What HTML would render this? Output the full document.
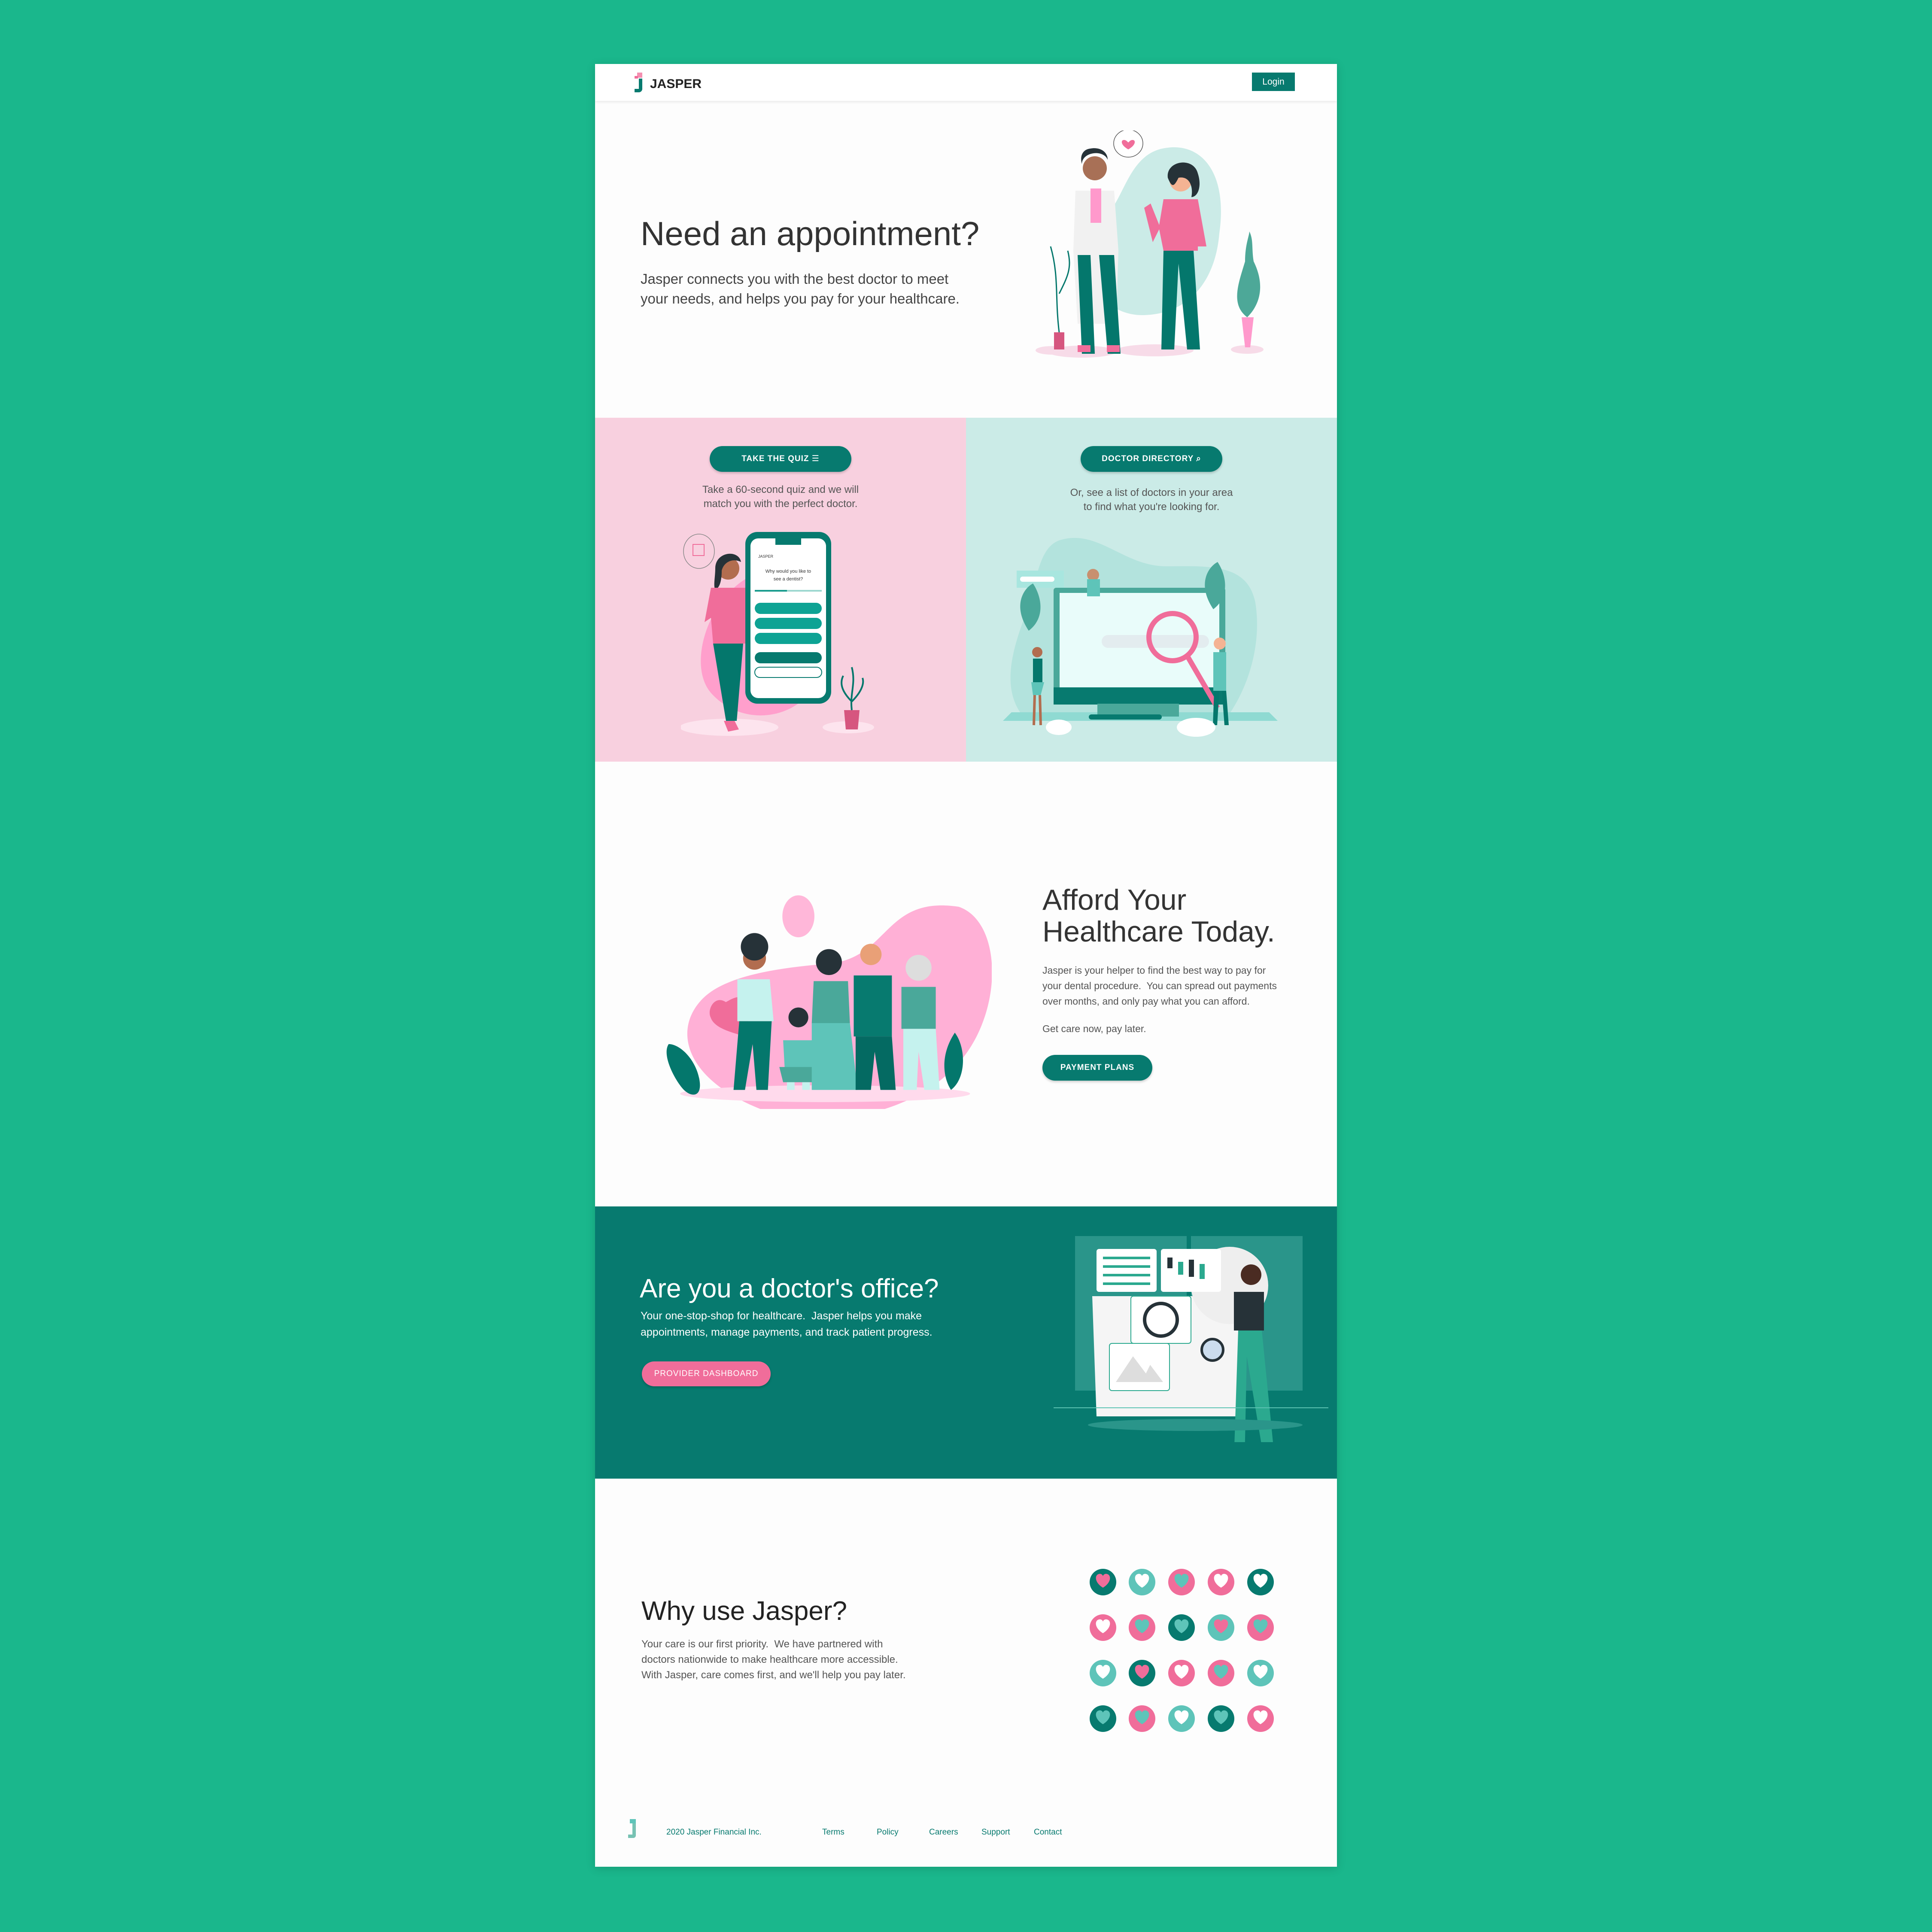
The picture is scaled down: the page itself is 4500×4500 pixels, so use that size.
<!DOCTYPE html>
<html><head><meta charset="utf-8">
<style>
*{margin:0;padding:0;box-sizing:border-box}
html,body{width:4500px;height:4500px;overflow:hidden;background:#1ab78c;font-family:"Liberation Sans",sans-serif}
.a{position:absolute}
#page{position:absolute;left:1386px;top:149px;width:1728px;height:4199px;background:#fdfdfd;overflow:hidden;box-shadow:0 4px 20px rgba(0,0,0,.15)}
.btn{position:absolute;border-radius:40px;color:#fff;font-weight:bold;text-align:center;letter-spacing:1px;box-shadow:0 3px 6px rgba(0,0,0,.2)}
.t{position:absolute;white-space:nowrap}
</style></head><body>
<div id="page">
<!-- header -->
<div class="a" style="left:0;top:0;width:1728px;height:86px;background:#fff;box-shadow:0 3px 6px rgba(0,0,0,.08)"></div>
<svg class="a" style="left:90px;top:20px" width="30" height="48" viewBox="0 0 30 48"><rect x="8" y="0" width="12" height="12" fill="#f48fb1"/><rect x="2" y="8" width="8" height="6" fill="#f06d9a"/><path d="M12 14h8v24a8 8 0 0 1-8 8H2v-8h10z" fill="#077a6f"/></svg>
<div class="t" style="left:128px;top:30px;font-size:30px;font-weight:bold;color:#222">JASPER</div>
<div class="a" style="left:1530px;top:20px;width:100px;height:43px;background:#077a6f;color:#fff;font-size:21px;text-align:center;line-height:43px">Login</div>

<!-- hero -->
<div class="t" style="left:106px;top:350px;font-size:78px;color:#333">Need an appointment?</div>
<div class="t" style="left:106px;top:478px;font-size:33px;line-height:46px;color:#444">Jasper connects you with the best doctor to meet<br>your needs, and helps you pay for your healthcare.</div>
<svg class="a" style="left:1024px;top:155px" width="552" height="556" viewBox="0 0 552 556">
<path d="M310 40c80-10 140 60 120 200-10 120-80 190-180 190-60 0-100-40-130-80-30-40-20-110 30-140 60-30 60-160 160-170z" fill="#cbebe7"/>
<ellipse cx="110" cy="515" rx="80" ry="14" fill="#f7dbe8"/><ellipse cx="280" cy="512" rx="90" ry="14" fill="#f7dbe8"/><ellipse cx="40" cy="512" rx="38" ry="10" fill="#f7dbe8"/><ellipse cx="495" cy="510" rx="38" ry="10" fill="#f7dbe8"/>
<ellipse cx="218" cy="30" rx="34" ry="32" fill="#fff" stroke="#555" stroke-width="1.5"/><path d="M208 22c-8 0-8 12 10 22 18-10 18-22 10-22-5 0-8 4-10 6-2-2-5-6-10-6z" fill="#f06d9a"/>
<circle cx="140" cy="88" r="28" fill="#a87056"/><path d="M110 78c0-28 50-35 60-10 0-20-20-30-40-26-20 2-25 20-20 36z" fill="#263238"/>
<path d="M95 140h90l10 140-5 170H100l-10-170z" fill="#f1f1f1"/><rect x="130" y="135" width="25" height="80" fill="#ff99cc"/>
<path d="M100 290h30l10 230h-30zM150 290h35l15 230h-30z" fill="#04776c"/><rect x="100" y="500" width="30" height="16" fill="#f06d9a"/><rect x="168" y="500" width="30" height="16" fill="#f06d9a"/>
<circle cx="340" cy="116" r="26" fill="#f4b393"/><path d="M310 110c-5-40 60-50 70-10 10 30 0 55-15 55 5-25-5-50-30-45-10 20-15 25-25 0z" fill="#263238"/>
<path d="M300 160h80l20 110h-20v10H300l-10-50-15 30-20-80 15-10 20 50z" fill="#f06d9a"/>
<path d="M300 280h70l15 230h-30l-20-200-10 200h-30z" fill="#04776c"/>
<path d="M45 510h24v-40H45z" fill="#d6567f"/><path d="M57 470c-10-80 0-130-20-200M57 380c20-40 30-60 20-100" stroke="#04776c" stroke-width="3" fill="none"/>
<path d="M490 505h12l8-70h-28z" fill="#ff99cc"/><path d="M495 435c-40-30-20-80-5-130 0-40 10-60 10-70 10 20 5 40 10 70 20 40 25 90-15 130z" fill="#4da898"/>
</svg>

<!-- split -->
<div class="a" style="left:0;top:824px;width:864px;height:801px;background:#f8d0df"></div>
<div class="a" style="left:864px;top:824px;width:864px;height:801px;background:#cbebe7"></div>
<div class="btn" style="left:267px;top:890px;width:330px;height:60px;background:#077a6f;font-size:19px;line-height:60px">TAKE THE QUIZ <span style="font-weight:normal">&#x2630;</span></div>
<div class="t" style="left:0;width:864px;text-align:center;top:975px;font-size:24px;line-height:33px;color:#555">Take a 60-second quiz and we will<br>match you with the perfect doctor.</div>
<div class="btn" style="left:1131px;top:890px;width:330px;height:60px;background:#077a6f;font-size:19px;line-height:60px">DOCTOR DIRECTORY &#x2315;</div>
<div class="t" style="left:864px;width:864px;text-align:center;top:982px;font-size:24px;line-height:33px;color:#555">Or, see a list of doctors in your area<br>to find what you're looking for.</div>
<svg class="a" style="left:200px;top:1085px" width="460" height="500" viewBox="0 0 460 500">
<path d="M180 100c140-40 180 100 150 220-30 120-180 150-260 60-60-70 0-240 110-280z" fill="#ff9fcc"/>
<ellipse cx="112" cy="460" rx="115" ry="20" fill="#fde4ee"/><ellipse cx="390" cy="460" rx="60" ry="14" fill="#fde4ee"/>
<ellipse cx="42" cy="50" rx="36" ry="40" fill="none" stroke="#888" stroke-width="1.5"/><rect x="28" y="34" width="26" height="26" fill="none" stroke="#f06d9a" stroke-width="2"/>
<rect x="150" y="5" width="200" height="400" rx="28" fill="#077a6f"/><rect x="162" y="20" width="176" height="372" rx="18" fill="#fff"/><rect x="220" y="5" width="60" height="30" fill="#077a6f"/>
<text x="180" y="65" font-size="9" fill="#333" font-family="Liberation Sans">JASPER</text>
<text x="250" y="100" font-size="11" fill="#333" text-anchor="middle" font-family="Liberation Sans">Why would you like to</text><text x="250" y="118" font-size="11" fill="#333" text-anchor="middle" font-family="Liberation Sans">see a dentist?</text>
<rect x="172" y="140" width="156" height="4" fill="#9dd8d0"/><rect x="172" y="140" width="75" height="4" fill="#1a9c8e"/>
<rect x="172" y="170" width="156" height="26" rx="13" fill="#0ea394"/><rect x="172" y="205" width="156" height="26" rx="13" fill="#0ea394"/><rect x="172" y="240" width="156" height="26" rx="13" fill="#0ea394"/><rect x="172" y="285" width="156" height="26" rx="13" fill="#077a6f"/><rect x="172" y="320" width="156" height="24" rx="12" fill="#fff" stroke="#077a6f" stroke-width="2"/>
<circle cx="110" cy="90" r="26" fill="#b26d4f"/><path d="M80 90c0-40 55-45 60-15-20-10-40 0-45 20 0 25-5 40-15 45-5-10 0-30 0-50z" fill="#263238"/>
<path d="M70 135h80v130H75l-5-60-15 10z" fill="#f06d9a"/><path d="M75 265h70l-15 180h-25z" fill="#04776c"/><path d="M100 445l10 25 25-5-10-20z" fill="#f06d9a"/>
<path d="M380 420h36l-4 45h-28z" fill="#d6567f"/><path d="M398 420c-5-40 10-60 0-100M398 400c-20-20-30-40-20-60M398 400c20-20 30-40 25-55" stroke="#04776c" stroke-width="4" fill="none"/>
</svg>
<svg class="a" style="left:950px;top:1090px" width="640" height="490" viewBox="0 0 640 490">
<path d="M130 20c90-30 150 60 250 60s200-10 210 100c10 90-20 180-60 240H40C0 360 20 280 50 200S80 40 130 20z" fill="#b3e3dd"/>
<path d="M0 440h640l-20-20H20z" fill="#8fdad2"/>
<rect x="118" y="130" width="400" height="270" rx="6" fill="#4aa89a"/><rect x="132" y="142" width="372" height="220" fill="#e9fcfa"/><rect x="118" y="362" width="400" height="40" fill="#077a6f"/><rect x="220" y="400" width="190" height="30" fill="#4aa89a"/><rect x="200" y="425" width="170" height="12" rx="6" fill="#077a6f"/>
<rect x="230" y="240" width="250" height="30" rx="15" fill="#e3ecef"/><circle cx="395" cy="245" r="55" fill="none" stroke="#f06d9a" stroke-width="12"/><path d="M430 290l70 120" stroke="#f06d9a" stroke-width="12"/>
<rect x="32" y="90" width="110" height="40" fill="#a8e6df"/><rect x="40" y="104" width="80" height="12" rx="6" fill="#fff"/>
<path d="M60 230c-40-60-10-100 10-110 20 30 30 80-10 110z" fill="#4aa89a"/><path d="M490 180c-40-60-10-100 10-110 20 30 30 80-10 110z" fill="#4aa89a"/>
<circle cx="505" cy="260" r="14" fill="#f4b393"/><path d="M490 280h30v90h-30z" fill="#5ec4b9"/><path d="M492 370h12l-5 80h-10zM510 370h10l6 80h-10z" fill="#04776c"/>
<circle cx="80" cy="280" r="12" fill="#b26d4f"/><path d="M70 295h22v60H70z" fill="#04776c"/><path d="M66 350h30l-8 30H70z" fill="#5ec4b9"/><path d="M74 380l-2 70M86 380l2 70" stroke="#b26d4f" stroke-width="6"/>
<circle cx="210" cy="100" r="14" fill="#c8906f"/><path d="M196 110h30v40h-30z" fill="#5ec4b9"/>
<ellipse cx="450" cy="455" rx="45" ry="22" fill="#fff"/><ellipse cx="130" cy="455" rx="30" ry="18" fill="#fff"/>
</svg>

<!-- afford -->
<svg class="a" style="left:121px;top:1883px" width="803" height="551" viewBox="0 0 850 620">
<ellipse cx="370" cy="115" rx="42" ry="55" fill="#ffb7d9"/>
<path d="M120 330c60-60 200-80 320-90 170-10 150-180 350-150 120 40 120 300-20 430-120 120-360 160-500 100C70 540 40 410 120 330z" fill="#ffb0d6"/>
<path d="M180 340c-30-20-50 20-40 40 10 30 60 40 90 50 5-30 20-70 0-100-20-10-40 5-50 10z" fill="#f06d9a"/>
<ellipse cx="440" cy="580" rx="380" ry="22" fill="#ffdaec"/>
<path d="M30 450c30 0 70 40 80 90s-20 50-40 30-60-90-40-120zM780 420c30 40 30 120-10 150-20-30-30-90 10-150z" fill="#04776c"/>
<circle cx="255" cy="225" r="30" fill="#b26d4f"/><circle cx="255" cy="195" r="36" fill="#263238"/>
<path d="M210 280h85l10 110h-95z" fill="#c5f2ee"/><path d="M215 390h85l-10 180h-30l-10-120-20 120h-30z" fill="#04776c"/>
<circle cx="370" cy="380" r="26" fill="#263238"/><path d="M330 440h80l-5 90h-70z" fill="#5ec4b9"/><path d="M320 510h100l-10 40H330z" fill="#4aa89a"/><path d="M340 550h20v20h-20zM380 550h20v20h-20z" fill="#c5f2ee"/>
<circle cx="450" cy="235" r="34" fill="#263238"/><path d="M410 285h90l5 110h-100z" fill="#4aa89a"/><path d="M405 395h100l20 175H405z" fill="#5ec4b9"/>
<circle cx="560" cy="215" r="28" fill="#e9a077"/><path d="M515 270h100v160h-100z" fill="#077a6f"/><path d="M520 430h95l10 140h-40l-15-100-10 100h-40z" fill="#046a62"/>
<circle cx="685" cy="250" r="34" fill="#ddd"/><path d="M640 300h90v110h-90z" fill="#4aa89a"/><path d="M645 410h85l10 160h-40l-15-100-5 100h-35z" fill="#c5f2ee"/>
</svg>
<div class="t" style="left:1042px;top:1910px;font-size:68px;line-height:74px;color:#333">Afford Your<br>Healthcare Today.</div>
<div class="t" style="left:1042px;top:2093px;font-size:23px;line-height:36px;color:#555">Jasper is your helper to find the best way to pay for<br>your dental procedure.&nbsp; You can spread out payments<br>over months, and only pay what you can afford.</div>
<div class="t" style="left:1042px;top:2234px;font-size:23px;color:#555">Get care now, pay later.</div>
<div class="btn" style="left:1042px;top:2308px;width:256px;height:60px;background:#077a6f;font-size:19px;line-height:60px">PAYMENT PLANS</div>

<!-- doctor's office -->
<div class="a" style="left:0;top:2661px;width:1728px;height:634px;background:#077a6f"></div>
<div class="t" style="left:104px;top:2817px;font-size:62px;color:#fff">Are you a doctor's office?</div>
<div class="t" style="left:106px;top:2897px;font-size:25px;line-height:38px;color:#fff">Your one-stop-shop for healthcare.&nbsp; Jasper helps you make<br>appointments, manage payments, and track patient progress.</div>
<div class="btn" style="left:109px;top:3022px;width:300px;height:58px;background:#f06d9a;font-size:19px;line-height:58px;font-weight:normal">PROVIDER DASHBOARD</div>
<svg class="a" style="left:1068px;top:2730px" width="640" height="480" viewBox="0 0 640 480">
<rect x="50" y="0" width="260" height="360" fill="#2a958a"/><rect x="320" y="0" width="260" height="360" fill="#2a958a"/>
<path d="M90 140h350l-10 280H100z" fill="#f5f5f5"/><circle cx="410" cy="115" r="90" fill="#eee"/>
<rect x="100" y="30" width="140" height="100" rx="6" fill="#fff"/><rect x="115" y="48" width="110" height="6" fill="#2ba98f"/><rect x="115" y="68" width="110" height="6" fill="#2ba98f"/><rect x="115" y="88" width="110" height="6" fill="#2ba98f"/><rect x="115" y="108" width="110" height="6" fill="#2ba98f"/>
<rect x="250" y="30" width="140" height="100" rx="6" fill="#fff"/><rect x="265" y="50" width="12" height="25" fill="#263238"/><rect x="290" y="60" width="12" height="30" fill="#2ba98f"/><rect x="315" y="55" width="12" height="40" fill="#263238"/><rect x="340" y="65" width="12" height="35" fill="#2ba98f"/>
<rect x="180" y="140" width="140" height="110" rx="6" fill="#fff" stroke="#2ba98f" stroke-width="2"/><circle cx="250" cy="195" r="38" fill="none" stroke="#263238" stroke-width="8"/>
<rect x="130" y="250" width="140" height="110" rx="6" fill="#fff" stroke="#2ba98f" stroke-width="2"/><path d="M145 340l40-60 30 40 10-20 30 40z" fill="#ddd"/>
<circle cx="460" cy="90" r="24" fill="#4a2b22"/><path d="M420 130h70v90h-70z" fill="#263238"/><path d="M430 220h55l30 300h-25l-40-240-5 240h-25z" fill="#2ba98f"/>
<circle cx="370" cy="265" r="25" fill="#cde" stroke="#263238" stroke-width="6"/>
<path d="M0 400h640" stroke="#5cc3b3" stroke-width="2"/><ellipse cx="330" cy="440" rx="250" ry="14" fill="#2a958a"/>
</svg>

<!-- why -->
<div class="t" style="left:108px;top:3568px;font-size:62px;color:#222">Why use Jasper?</div>
<div class="t" style="left:108px;top:3663px;font-size:24px;line-height:36px;color:#555">Your care is our first priority.&nbsp; We have partnered with<br>doctors nationwide to make healthcare more accessible.<br>With Jasper, care comes first, and we'll help you pay later.</div>
<svg class="a" style="left:1100px;top:3450px" width="500" height="460" viewBox="0 0 500 460">
<defs><path id="h" d="M0 13c-20-12-20-30-9-32 5-1 8 2 9 5 1-3 4-6 9-5 11 2 11 20-9 32z"/></defs>
<circle cx="83" cy="86" r="31" fill="#077a6f"/><use href="#h" x="83" y="86" fill="#f06d9a"/>
<circle cx="174" cy="86" r="31" fill="#5ec4b9"/><use href="#h" x="174" y="86" fill="#fff"/>
<circle cx="266" cy="86" r="31" fill="#f06d9a"/><use href="#h" x="266" y="86" fill="#5ec4b9"/>
<circle cx="358" cy="86" r="31" fill="#f06d9a"/><use href="#h" x="358" y="86" fill="#fff"/>
<circle cx="450" cy="86" r="31" fill="#077a6f"/><use href="#h" x="450" y="86" fill="#fff"/>
<circle cx="83" cy="192" r="31" fill="#f06d9a"/><use href="#h" x="83" y="192" fill="#fff"/>
<circle cx="174" cy="192" r="31" fill="#f06d9a"/><use href="#h" x="174" y="192" fill="#5ec4b9"/>
<circle cx="266" cy="192" r="31" fill="#077a6f"/><use href="#h" x="266" y="192" fill="#5ec4b9"/>
<circle cx="358" cy="192" r="31" fill="#5ec4b9"/><use href="#h" x="358" y="192" fill="#f06d9a"/>
<circle cx="450" cy="192" r="31" fill="#f06d9a"/><use href="#h" x="450" y="192" fill="#5ec4b9"/>
<circle cx="83" cy="298" r="31" fill="#5ec4b9"/><use href="#h" x="83" y="298" fill="#fff"/>
<circle cx="174" cy="298" r="31" fill="#077a6f"/><use href="#h" x="174" y="298" fill="#f06d9a"/>
<circle cx="266" cy="298" r="31" fill="#f06d9a"/><use href="#h" x="266" y="298" fill="#fff"/>
<circle cx="358" cy="298" r="31" fill="#f06d9a"/><use href="#h" x="358" y="298" fill="#5ec4b9"/>
<circle cx="450" cy="298" r="31" fill="#5ec4b9"/><use href="#h" x="450" y="298" fill="#fff"/>
<circle cx="83" cy="404" r="31" fill="#077a6f"/><use href="#h" x="83" y="404" fill="#5ec4b9"/>
<circle cx="174" cy="404" r="31" fill="#f06d9a"/><use href="#h" x="174" y="404" fill="#5ec4b9"/>
<circle cx="266" cy="404" r="31" fill="#5ec4b9"/><use href="#h" x="266" y="404" fill="#fff"/>
<circle cx="358" cy="404" r="31" fill="#077a6f"/><use href="#h" x="358" y="404" fill="#5ec4b9"/>
<circle cx="450" cy="404" r="31" fill="#f06d9a"/><use href="#h" x="450" y="404" fill="#fff"/>
</svg>

<!-- footer -->
<svg class="a" style="left:75px;top:4088px" width="24" height="46" viewBox="0 0 24 46"><rect x="6" y="0" width="14" height="10" fill="#5ec4b9"/><path d="M12 10h8v28a6 6 0 0 1-6 6H2v-8h10z" fill="#77c2b3"/></svg>
<div class="t" style="left:166px;top:4108px;font-size:19px;color:#077a6f">2020 Jasper Financial Inc.</div>
<div class="t" style="left:529px;top:4108px;font-size:19px;color:#077a6f">Terms</div>
<div class="t" style="left:656px;top:4108px;font-size:19px;color:#077a6f">Policy</div>
<div class="t" style="left:778px;top:4108px;font-size:19px;color:#077a6f">Careers</div>
<div class="t" style="left:900px;top:4108px;font-size:19px;color:#077a6f">Support</div>
<div class="t" style="left:1022px;top:4108px;font-size:19px;color:#077a6f">Contact</div>
</div>
</body></html>
